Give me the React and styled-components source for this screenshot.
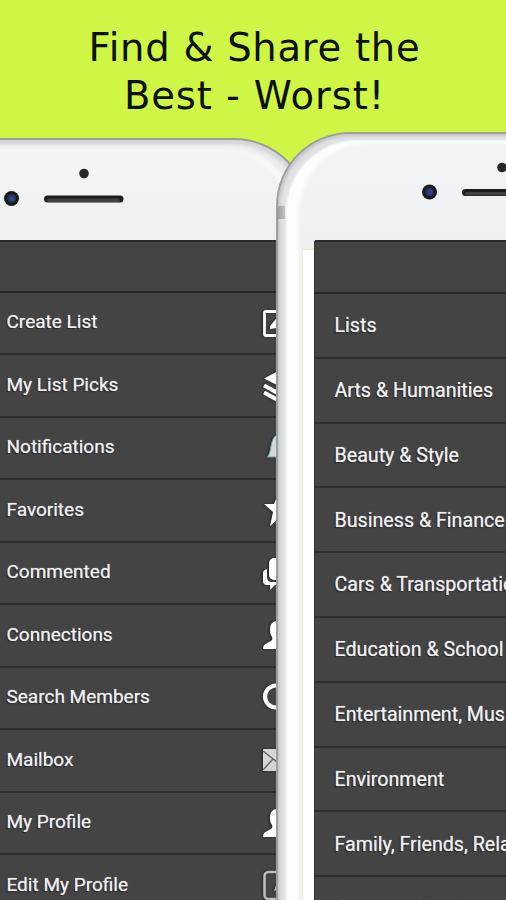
import React from "react";
import styled, { createGlobalStyle } from "styled-components";

const GlobalStyle = createGlobalStyle`
  *, *::before, *::after { box-sizing: border-box; }
  body { margin: 0; background: #cff644; }
`;

const Poster = styled.main`
  display: grid;
  grid-template: 900px / 506px;
  width: 506px;
  height: 900px;
  overflow: hidden;
  background: #cff644;
  > * { grid-area: 1 / 1; }
`;

const Headline = styled.h1`
  margin: 24px 0 0;
  padding-left: 3px;
  font: 400 38.5px/47.5px Verdana, "DejaVu Sans", sans-serif;
  text-align: center;
  color: #0b1004;
  white-space: nowrap;
`;

const HeadlineLine = styled.span`
  display: block;
  letter-spacing: ${(p) => p.$spacing};
`;

const Phone = styled.section`
  display: flex;
  flex-direction: column;
  align-items: flex-start;
  overflow: hidden;
  isolation: isolate;
  background: linear-gradient(#f3f5f6, #edeff1 110px);
`;

const BackPhone = styled(Phone)`
  width: 350px;
  height: 830px;
  margin: 138px 0 0 -40px;
  padding-left: 40px;
  border: solid #9b9d9b;
  border-width: 2px 2px 0 0;
  border-radius: 0 76px 0 0;
  box-shadow: inset -2px 4px 3px #d4d6d8, inset -8px 8px 4px #e9ebed, inset -15px 8px 5px #fbfcfc;
`;

const FrontPhone = styled(Phone)`
  width: 300px;
  height: 830px;
  margin: 132px 0 0 276px;
  border: solid #9c9ea0;
  border-width: 2px 0 0 2px;
  border-radius: 74px 0 0 0;
  box-shadow: inset 2px 2px 3px #c4c6c8, inset 8px 6px 2px #e0e2e4, inset 21px 8px 4px #fdfdfd;
`;

const Bezel = styled.svg`
  display: block;
  flex: none;
`;

const Antenna = styled.div`
  width: 7px;
  height: 13px;
  margin-top: -34px;
  margin-bottom: 21px;
  background: linear-gradient(90deg, #9b9da0, #c1c3c5);
`;

const FrontBody = styled.div`
  display: flex;
  align-items: flex-start;
`;

const SideGlow = styled.div`
  width: 12px;
  height: 670px;
  margin: 9px 0 0 24px;
  background: #fff;
  border-left: 1px solid #edf2dc;
  border-top: 1px solid #e5efbf;
`;

const Menu = styled.ul`
  flex: none;
  width: ${(p) => p.$width}px;
  margin: 0;
  padding: 0;
  list-style: none;
  background: #444;
  border-top: 2px solid #2b2b2b;
  border-left: ${(p) => (p.$edge ? "1px solid #333" : "0")};
  border-top-left-radius: ${(p) => (p.$edge ? "2px" : "0")};
`;

const MenuBar = styled.li`
  height: ${(p) => p.$height}px;
  border-bottom: 2px solid #262626;
`;

const MenuItem = styled.li`
  display: flex;
  align-items: center;
  justify-content: space-between;
  height: ${(p) => p.$height}px;
  padding: ${(p) => p.$drop || 0}px 0 0 ${(p) => p.$inset}px;
  border-bottom: 2px solid #2d2d2d;
  font: 400 ${(p) => p.$size}px/24px Roboto, sans-serif;
  color: #f0f0f0;
  text-shadow: 0 0 1px #bbb, -1px 1px 1px #1c1c1c;
  white-space: nowrap;
`;

const MemberItem = styled(MenuItem)`
  padding-bottom: 1px;
`;

const IconSvg = styled.svg`
  flex: none;
  margin-top: 1px;
  overflow: visible;
  filter: drop-shadow(-1px 0 1px #222);
`;

const person = (
  <path fill="#fff" d="M0 28c0-4 2-5 6-7 3-1 4-3 3-5-2-3-2-5-2-8 0-5 3-8 7-8s7 3 7 8c0 4-1 6-2 8-1 3 0 4 3 5 4 2 6 3 6 7z" />
);

const glyphs = {
  create: (
    <g>
      <rect x="1.5" y="2.5" width="24" height="24" rx="1" fill="none" stroke="#fff" strokeWidth="2.8" />
      <path d="M7 20v-3l10-12 6 5-9 9z" fill="#fff" />
    </g>
  ),
  layers: (
    <g>
      <path d="M1 7.500 15 0l13 7.500-13 7z" fill="#fff" />
      <path d="m1 14.500 14 7.500 14-7.500M1 21.500l14 7.500 14-7.500" fill="none" stroke="#fff" strokeWidth="4.200" />
    </g>
  ),
  bell: (
    <path d="M4 23c4-4 3-10 5-15 1-4 3-7 7-7l7 6 5 16z" fill="#d3d7d8" stroke="#6c9bab" strokeWidth="1" />
  ),
  star: <path d="M1 9h10l4-10 4 10h10l-9 8 4 14-9-7-8 7 3-14z" fill="#fff" transform="translate(0 -1)" />,
  chat: (
    <g fill="#fff">
      <path d="M4 10v8q0 5 5 5h11v3h-8l-5 5v-5H4q-4 0-4-4v-8q0-3 4-4" />
      <rect x="6" y="-1" width="22" height="22" rx="5" />
    </g>
  ),
  person,
  search: (
    <g fill="none" stroke="#fff">
      <circle cx="13" cy="12.500" r="11" strokeWidth="4.200" />
      <path d="m21 21 8 8" strokeWidth="5" />
    </g>
  ),
  mail: (
    <g>
      <rect y="3" width="29" height="22" fill="#d5d5d5" />
      <path d="m0 5 14 11L28 5M0 24l10-11" fill="none" stroke="#666" strokeWidth="1.400" />
    </g>
  ),
  edit: (
    <g>
      <rect x="1.500" y="1" width="26" height="27" rx="4" fill="none" stroke="#bdbdbd" strokeWidth="2.600" />
      <path d="m11 20 2-6 9-9 3 3-9 10z" fill="#bdbdbd" />
    </g>
  ),
};

function Glyph({ name }) {
  return (
    <IconSvg width="14" height="28" viewBox="0 0 14 28">
      {glyphs[name]}
    </IconSvg>
  );
}

const memberItems = [
  ["Create List", "create"],
  ["My List Picks", "layers"],
  ["Notifications", "bell"],
  ["Favorites", "star"],
  ["Commented", "chat"],
  ["Connections", "person"],
  ["Search Members", "search"],
  ["Mailbox", "mail"],
  ["My Profile", "person"],
  ["Edit My Profile", "edit"],
];

const categories = [
  "Lists",
  "Arts & Humanities",
  "Beauty & Style",
  "Business & Finance",
  "Cars & Transportation",
  "Education & School",
  "Entertainment, Music",
  "Environment",
  "Family, Friends, Relationships",
  "Games & Hobbies",
];

function Camera({ x, y }) {
  return (
    <g>
      <circle cx={x} cy={y} r="7.500" fill="#181a20" />
      <circle cx={x} cy={y} r="4.600" fill="#25304f" />
      <circle cx={x + 0.5} cy={y} r="2.600" fill="#2d4488" />
    </g>
  );
}

export default function App() {
  return (
    <>
      <GlobalStyle />
      <Poster>
        <Headline>
          <HeadlineLine $spacing="0.75px">Find &amp; Share the</HeadlineLine>
          <HeadlineLine $spacing="0.9px">Best - Worst!</HeadlineLine>
        </Headline>
        <BackPhone>
          <Bezel width="290" height="100" viewBox="0 140 290 100">
            <circle cx="84" cy="173.500" r="4.800" fill="#25272a" />
            <Camera x={11.5} y={198.500} />
            <rect x="44" y="195.500" width="79.500" height="7" rx="3.500" fill="#1c1c1c" />
            <rect x="47" y="198.500" width="73" height="3.500" rx="1.700" fill="#404040" />
          </Bezel>
          <Menu $width={277}>
            <MenuBar $height={50.5} />
            {memberItems.map(([label, icon]) => (
              <MemberItem key={label} $height={62.5} $inset={6.5} $size={19}>
                {label}
                <Glyph name={icon} />
              </MemberItem>
            ))}
          </Menu>
        </BackPhone>
        <FrontPhone>
          <Bezel width="228" height="106" viewBox="278 134 228 106">
            <circle cx="502" cy="167.500" r="4.800" fill="#25272a" />
            <Camera x={429.500} y={192} />
            <rect x="462" y="189" width="80" height="7" rx="3.500" fill="#1c1c1c" />
            <rect x="465" y="192" width="73" height="3.500" rx="1.700" fill="#404040" />
          </Bezel>
          <Antenna />
          <FrontBody>
            <SideGlow />
            <Menu $width={194} $edge>
              <MenuBar $height={52} />
              {categories.map((label) => (
                <MenuItem key={label} $height={64.8} $inset={19.5} $size={19.65} $drop={1.5}>
                  {label}
                </MenuItem>
              ))}
            </Menu>
          </FrontBody>
        </FrontPhone>
      </Poster>
    </>
  );
}
